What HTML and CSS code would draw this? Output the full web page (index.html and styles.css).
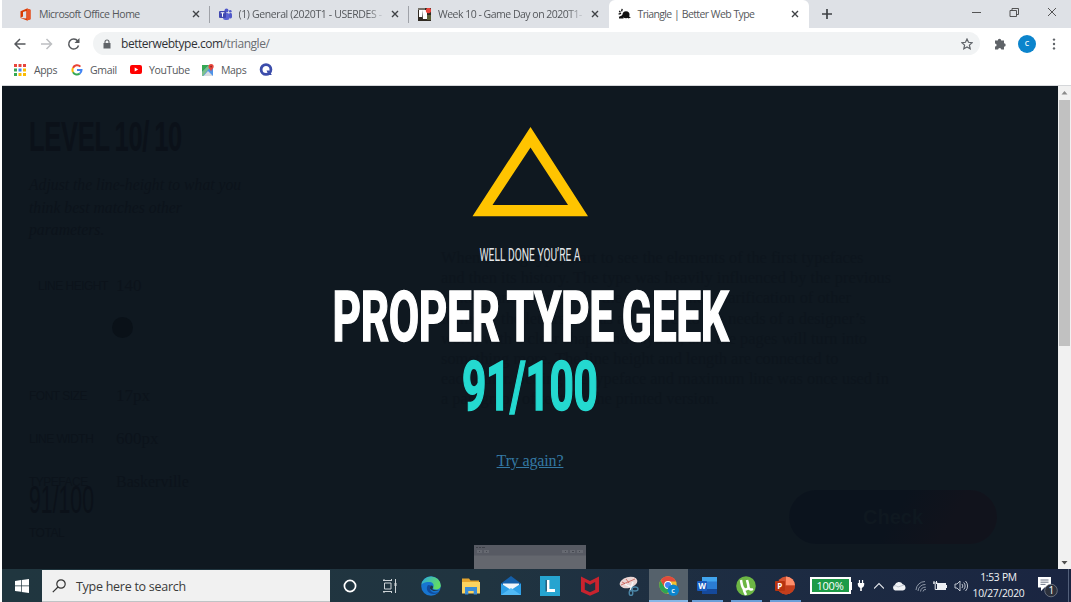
FILE: index.html
```html
<!DOCTYPE html>
<html lang="en">
<head>
<meta charset="utf-8">
<title>Triangle | Better Web Type</title>
<link rel="stylesheet" href="styles.css">
</head>
<body>
<div class="browser">
  <header class="tabs">
    <div class="tab">
      <svg class="fav" viewBox="0 0 13 13"><path d="M1.500 3.200 8 .5l3.500 1.300v9.400L8 12.500 1.500 10l5.800.5V3L4 4v4.500L1.500 10z" fill="#d83b01"/><path d="M8 .5l3.500 1.300v9.400L8 12.500z" fill="#e8572a"/></svg>
      <span class="title t1">Microsoft Office Home</span>
      <svg class="close" viewBox="0 0 8 8"><path d="M1 1l6 6M7 1L1 7"/></svg>
    </div>
    <div class="tab">
      <svg class="fav" viewBox="0 0 13 13"><circle cx="7.500" cy="2.500" r="2" fill="#5059c9"/><circle cx="11.300" cy="3.200" r="1.300" fill="#5059c9"/><rect x="4" y="5" width="6.500" height="7" rx="2.500" fill="#5b63d3"/><rect x="10" y="5" width="3" height="5.500" rx="1.400" fill="#5059c9"/><rect y="3" width="7" height="7" rx="1" fill="#4048b0"/><path d="M1.700 4.800h3.600M3.500 4.800v4" stroke="#fff" stroke-width="1"/></svg>
      <span class="title t2">(1) General (2020T1 - USERDES -</span>
      <svg class="close" viewBox="0 0 8 8"><path d="M1 1l6 6M7 1L1 7"/></svg>
    </div>
    <div class="tab last">
      <svg class="fav" viewBox="0 0 13 13"><rect width="13" height="13" fill="#302a22"/><rect width="7" height="2" fill="#77736a"/><path d="M1 2h3v7H1zM4 2h5v9H5z" fill="#fff"/><path d="M9 7h4v5H9z" fill="#5b5f36"/><circle cx="10.500" cy="2.500" r="2.700" fill="#e8453c"/></svg>
      <span class="title t3">Week 10 - Game Day on 2020T1-</span>
      <svg class="close" viewBox="0 0 8 8"><path d="M1 1l6 6M7 1L1 7"/></svg>
    </div>
    <div class="tab active">
      <svg class="fav" viewBox="0 0 13 13"><path d="M1.300 2.800 2.400 4.400M4.200.8 3.600 3.400M.6 6.200l2.500-.8M1 9.400l3-.9" stroke="#111" stroke-width="1.300"/><circle cx="8" cy="6.800" r="3.500" fill="#111"/><path d="M1 9.500 5.500 6v4.500H1zM10 8l3 1.500-3 1z" fill="#111"/></svg>
      <span class="title t4">Triangle | Better Web Type</span>
      <svg class="close" viewBox="0 0 8 8"><path d="M1 1l6 6M7 1L1 7"/></svg>
    </div>
    <svg class="plus" viewBox="0 0 12 12"><path d="M6 1v10M1 6h10"/></svg>
    <svg class="winbtns" viewBox="0 0 90 20"><path d="M1 8.500h9M39 6.500h6.500v6H39zM41 6.500v-2h6.500v6h-2M77 4l8 8M85 4l-8 8"/></svg>
  </header>
  <div class="toolbar">
    <svg class="nav" viewBox="0 0 80 20"><g fill="none" stroke-width="1.500"><path d="M11.500 10H1M6 5l-5 5 5 5" stroke="#55585c"/><path d="M27 10h10.500M32.500 5l5 5-5 5" stroke="#bdbfc2"/><path d="M63.700 7A5 5 0 1 0 64.500 11.500" stroke="#55585c"/></g><path d="M65.500 4v5h-5z" fill="#55585c"/></svg>
    <div class="omnibox">
      <svg class="lock" viewBox="0 0 8 10"><path d="M.5 4h7v5.500h-7z" fill="#5f6368"/><path d="M2 4.500V3a2 2 0 0 1 4 0v1.500" fill="none" stroke="#5f6368" stroke-width="1.100"/></svg>
      <span class="url">betterwebtype.com<span class="path">/triangle/</span></span>
      <svg class="star" viewBox="0 0 12 12"><path d="M6 1l1.500 3.300 3.600.4-2.700 2.400.8 3.600L6 8.900l-3.200 1.800.8-3.600L.9 4.700l3.600-.4z"/></svg>
    </div>
    <svg class="puzzle" viewBox="0 0 13 13"><path d="M1 3.500h2.800a1.700 1.700 0 1 1 3.400 0H10v2.800a1.700 1.700 0 1 1 0 3.400v2.800H7.300a1.600 1.600 0 1 0-3.200 0H1V9.600a1.600 1.600 0 1 0 0-3.200z"/></svg>
    <span class="avatar">C</span>
    <svg class="dots" viewBox="0 0 4 12"><circle cx="2" cy="1.600" r="1.200"/><circle cx="2" cy="6" r="1.200"/><circle cx="2" cy="10.400" r="1.200"/></svg>
  </div>
  <nav class="bookmarks">
    <svg class="apps" viewBox="0 0 12 12"><path d="M0 0h3v3H0zM4.500 0h3v3h-3zM9 0h3v3H9z" fill="#e8453c"/><path d="M0 4.500h3v3H0z" fill="#34a853"/><path d="M4.500 4.500h3v3h-3z" fill="#4285f4"/><path d="M9 4.500h3v3H9z" fill="#fbbc05"/><path d="M0 9h3v3H0z" fill="#34a853"/><path d="M4.500 9h3v3h-3zM9 9h3v3H9z" fill="#fbbc05"/></svg>
    <span class="bm b1">Apps</span>
    <svg class="goog" viewBox="0 0 12 12"><g fill="none" stroke-width="2"><path d="M9.400 2.600A4.500 4.500 0 0 0 2 4" stroke="#ea4335"/><path d="M2 4a4.500 4.500 0 0 0 0 4.200" stroke="#fbbc05"/><path d="M2 8.200a4.500 4.500 0 0 0 6.800 1.300" stroke="#34a853"/><path d="M8.800 9.500A4.500 4.500 0 0 0 10.500 6H6" stroke="#4285f4"/></g></svg>
    <span class="bm b2">Gmail</span>
    <svg class="yt" viewBox="0 0 12 9"><rect width="12" height="9" rx="2" fill="#f00"/><path d="M4.700 2.500v4L8.200 4.500z" fill="#fff"/></svg>
    <span class="bm b3">YouTube</span>
    <svg class="maps" viewBox="0 0 12 12"><path d="M0 1h11v11H0z" fill="#4f93e8"/><path d="M0 1h7L0 8z" fill="#34a853"/><path d="M0 8 7 1h3L1 12H0z" fill="#7cc08b"/><path d="M1.500 12 6 7l5 5z" fill="#d9dde0"/><path d="M9 7.500C8.500 5.500 6.500 4.800 6.500 2.600a2.600 2.600 0 0 1 5.200 0C11.700 4.800 9.500 5.500 9 7.500z" fill="#e8453c"/><circle cx="9.100" cy="2.600" r=".9" fill="#8b2b20"/></svg>
    <span class="bm b4">Maps</span>
    <svg class="qicon" viewBox="0 0 14 14"><circle cx="7" cy="6.500" r="4.900" fill="none" stroke="#3c4dab" stroke-width="2.800"/><path d="M7.500 7.500h2.700l2.600 4.500H9.600z" fill="#3c4dab"/></svg>
  </nav>
  <div class="viewport">
    <main class="page">
      <div class="ghost">
        <aside class="panel">
          <svg class="g-level" viewBox="0 0 166 60"><text x="0" y="38" textLength="153" lengthAdjust="spacingAndGlyphs">LEVEL 10/ 10</text></svg>
          <p class="g-copy">Adjust the line-height to what you<br>think best matches other<br>parameters.</p>
          <div class="g-row r1"><span class="g-key indent">LINE HEIGHT</span><span>140</span></div>
          <div class="g-knob"></div>
          <div class="g-row"><span class="g-key">FONT SIZE</span><span>17px</span></div>
          <div class="g-row"><span class="g-key">LINE WIDTH</span><span>600px</span></div>
          <div class="g-row r4"><span class="g-key">TYPEFACE</span><span class="g-face">Baskerville</span></div>
          <svg class="g-score" viewBox="0 0 70 40"><text x="0" y="31" textLength="65" lengthAdjust="spacingAndGlyphs">91/100</text></svg>
          <div class="g-key">TOTAL</div>
        </aside>
        <section class="sample">
          <p>When setting type, start to see the elements of the first typefaces<br>and then its history. The type was heavily influenced by the previous<br>century and the work of the printers, then clarification of other<br>forms of the letters. It was an answer to the needs of a designer’s<br>work, with a clear shape and rhythm, and the pages will turn into<br>something more. The line height and length are connected to<br>each other. Setting the typeface and maximum line was once used in<br>a paragraph of text for the printed version.</p>
          <div class="g-check">Check</div>
        </section>
      </div>
      <section class="result">
        <svg class="triangle" viewBox="0 0 116 90"><path fill-rule="evenodd" d="M58.500 0 116 89.300H.5zM58.500 20.500 20.500 78H96z"/></svg>
        <svg class="well" viewBox="0 0 106 24"><text x="2.500" y="17.500" textLength="101" lengthAdjust="spacingAndGlyphs">WELL DONE YOU’RE A</text></svg>
        <svg class="headline" viewBox="0 0 400 70"><text x="2.500" y="60" textLength="396" lengthAdjust="spacingAndGlyphs">PROPER TYPE GEEK</text></svg>
        <svg class="score" viewBox="0 0 140 70"><text x="2" y="59" textLength="135.500" lengthAdjust="spacingAndGlyphs">91/100</text></svg>
        <a class="again" href="#">Try again?</a>
        <svg class="mock" viewBox="0 0 112 24"><path d="M0 0h112v24H0z" fill="#64676e"/><path d="M0 0h112v10.500H0z" fill="#575a63"/><path d="M2 2h2v1H2zM5 2h2v1H5zM8 2h3v1H8z" fill="#3e4149"/><path d="M3 6.500h5M10 6.500h5M88 6.500h6M96 6.500h5M103 6.500h6" stroke="#666971" stroke-width="3"/><path d="M5 6.500h1M12 6.500h1M91 6.500h1M98 6.500h2M105 6.500h1" stroke="#454850"/></svg>
      </section>
    </main>
    <div class="scroll">
      <svg viewBox="0 0 13 13"><path d="M3.500 8.500h6L6.500 5z" fill="#8b8b8b"/></svg>
      <div class="thumb"></div>
      <svg class="down" viewBox="0 0 13 13"><path d="M3.500 5h6l-3 3.500z" fill="#505050"/></svg>
    </div>
  </div>
  <footer class="taskbar">
    <div class="start"><svg viewBox="0 0 14 14"><path d="M0 2l6-.9v5.500H0zM6.700 1 14 0v6.600H6.700zM0 7.300h6v5.500L0 12zM6.700 7.300H14V14l-7.300-1z" fill="#fff"/></svg></div>
    <div class="search">
      <svg viewBox="0 0 14 14"><circle cx="9" cy="5" r="4.200"/><path d="M6 8 .8 13.200"/></svg>
      <span>Type here to search</span>
    </div>
    <div class="apps-row">
      <div><svg class="i14" viewBox="0 0 14 14"><circle cx="7" cy="7" r="5.600" fill="none" stroke="#fff" stroke-width="1.700"/></svg></div>
      <div><svg class="i14" viewBox="0 0 14 14"><path d="M0 1.500h9M0 12.500h9M1.500 4h6.500v6H1.500zM1 0v2M8.500 0v2M1 12v2M8.500 12v2M12.500 0v14" fill="none" stroke="#cdd3d6"/><path d="M11.500 4h2v3h-2z" fill="#cdd3d6"/></svg></div>
      <div><svg class="i20" viewBox="0 0 20 20"><defs><linearGradient id="eg" x1="0" y1="0" x2="1" y2=".4"><stop offset="0" stop-color="#2aa8e0"/><stop offset="1" stop-color="#63dd63"/></linearGradient></defs><circle cx="10" cy="10" r="9.800" fill="#1775d0"/><path d="M.3 9A9.800 9.800 0 0 1 19.800 9.500c0 4-5.500 5-7.800 3 1.500-3 .5-6-3-6.500C5 5.500 1 7 .3 9z" fill="url(#eg)"/><path d="M7 9c-3 4 0 9 6 9 2 0 4-.8 5-2-5 2-9 0-9-3.500 0-2 1-3 1-3z" fill="#114b9c"/><path d="M11.200 13c1.300-1.500 1-3-.3-3.600-1.500 0-2 1.600-1.900 3.100 1.500 2.500 6 3.500 9.500 1.500-3 .8-6.300.2-7.300-1z" fill="#213640"/></svg></div>
      <div><svg class="i20" viewBox="0 0 20 20"><path d="M1 2.500h7l1.500 2H18V8H1z" fill="#e5a52e"/><path d="M1 6h18v11.500H1z" fill="#fbd360"/><path d="M4 11h12v7.500h-3.300V15H7.300v3.500H4z" fill="#3b8dd6"/></svg></div>
      <div><svg class="i20" viewBox="0 0 20 20"><path d="M0 7.500 10 0l10 7.500V12H0z" fill="#155fa8"/><path d="M2 7.500h16v6H2z" fill="#f2f6fa"/><path d="M0 7.500 10 14l10-6.500V19H0z" fill="#2e9fe6"/><path d="M0 19 10 12l10 7z" fill="#51b9f5"/></svg></div>
      <div><svg class="i20" viewBox="0 0 20 20"><path d="M0 0h20v20H0z" fill="#26a4d0"/><path d="M8 4v10.500h7" fill="none" stroke="#fff" stroke-width="2.800"/><path d="M6.200 4v11.500" stroke="#0d3550"/></svg></div>
      <div><svg class="i20" viewBox="0 0 20 20"><path d="M1 .5l9 4.500 9-4.500v15.200l-9 4-9-4zM4.800 6v7.800l5.200 2.400 5.200-2.400V6L10 8.700z" fill="#c8232e" fill-rule="evenodd"/></svg></div>
      <div><svg class="i20" viewBox="0 0 20 20"><ellipse cx="9.500" cy="6.500" rx="9" ry="5.500" transform="rotate(-15 9.500 6.500)" fill="#ead5d3"/><path d="M2 9 16 3M7 3l3 4M3 6l6 3" stroke="#c4483f" stroke-width=".7"/><path d="M6 8l8 4M14 6l-3 9" stroke="#f4f6f8" stroke-width="1.500"/><g fill="none" stroke="#4c87a8" stroke-width="1.400"><ellipse cx="16" cy="13" rx="3" ry="2"/><ellipse cx="12" cy="17" rx="1.800" ry="2.500"/></g></svg></div>
      <div class="on"><svg class="i20" viewBox="0 0 20 20"><circle cx="9" cy="9" r="8.700" fill="#f2c12e"/><path d="M1.500 4.600A8.700 8.700 0 0 1 17 5.500H9z" fill="#e14a3c"/><path d="M1.500 4.600A8.700 8.700 0 0 0 8 17.700l4-6L5.500 11z" fill="#2fa552"/><path d="M1.500 4.600 5.500 11 9 5.500z" fill="#e14a3c"/><circle cx="9" cy="9" r="3.900" fill="#fff"/><circle cx="9" cy="9" r="3" fill="#4285f4"/><circle cx="14.300" cy="14.300" r="5.700" fill="#0c84cc"/><text x="12.300" y="17" class="badge-c">c</text></svg></div>
      <div class="run"><svg class="i20" viewBox="0 0 20 20"><rect x="5" y="1" width="15" height="17" rx="1" fill="#2b7cd3"/><path d="M5 1h15v4.500H5z" fill="#41a5ee"/><path d="M5 13h15v5H5z" fill="#15499b"/><rect y="5" width="10" height="10" rx="1" fill="#185abd"/><text x="1.300" y="12.800" class="glyph">W</text></svg></div>
      <div class="run"><svg class="i20" viewBox="0 0 20 20"><circle cx="10" cy="10" r="9.800" fill="#6cb644"/><path d="M5 4c.5 4 1 6.500 2.500 8.500C9 14 12 13.500 12.500 11.500 12.500 9 11.500 6 11 4M12.500 11.500c.7 2 2.500 2.500 4.500 1.500M7.500 12.500C8 15 9 17 10 19" fill="none" stroke="#fff" stroke-width="2.500"/></svg></div>
      <div class="run"><svg class="i20" viewBox="0 0 20 20"><circle cx="11" cy="9.500" r="9" fill="#d35230"/><path d="M11 .5a9 9 0 0 1 9 9h-9z" fill="#ff8f6b"/><path d="M2 9.500h18a9 9 0 0 1-18 0z" fill="#c43e1c"/><rect y="5" width="10" height="10" rx="1" fill="#b7330f"/><text x="2.300" y="12.800" class="glyph">P</text></svg></div>
    </div>
    <div class="tray">
      <span class="charge">100%</span><span class="nub"></span>
      <svg class="plug" viewBox="0 0 10 14"><path d="M1 4h8v2.500A4 4 0 0 1 6 10v4H4v-4A4 4 0 0 1 1 6.500zM2.300 0h1.500v4H2.300zM6.200 0h1.500v4H6.200z"/></svg>
      <svg class="chev" viewBox="0 0 10 10"><path d="M0 7.500l5-5 5 5"/></svg>
      <svg class="cloud" viewBox="0 0 14 10"><path d="M3 9.500a3 3 0 0 1-.3-5.500 4.400 4.400 0 0 1 8-.8A3.200 3.200 0 0 1 11 9.500z"/><path d="M1 5.500c2-1 3-1 5 .5l6-2" fill="none" stroke="#a9b0bd" stroke-width=".7"/></svg>
      <svg class="wifi" viewBox="0 0 12 12"><path d="M1 10A9 9 0 0 1 10 1.500M3 11A7 7 0 0 1 10.500 4.500M5.500 11.500a5 5 0 0 1 5.300-4.300M8 11.500a2.500 2.500 0 0 1 3-2"/></svg>
      <svg class="batt" viewBox="0 0 14 10"><path d="M4 2h9v7H4z" fill="#eceff3"/><path d="M0 2h4.500M1 0v3M3.500 0v3M2.200 3v5.500H4M13.500 4v3" fill="none" stroke="#eceff3"/></svg>
      <svg class="vol" viewBox="0 0 14 12"><path d="M1 4h2l3-3v10L3 8H1zM8 4a3 3 0 0 1 0 4M9.700 2.500a5 5 0 0 1 0 7M11.500 1a7 7 0 0 1 0 10"/></svg>
      <div class="clock"><span>1:53 PM</span><span>10/27/2020</span></div>
      <svg class="note" viewBox="0 0 22 22"><path d="M1 1h13v10.500H7.500L4 15v-3.500H1z" fill="#fff"/><path d="M3.500 4h8M3.500 6.200h8M3.500 8.400h5" stroke="#5b6577" stroke-width=".9"/><circle cx="14" cy="14.500" r="6.300" fill="#2b303b" stroke="#828a96" stroke-width=".7"/><text x="11.400" y="18.300" class="badge-n">1</text></svg>
      <span class="peek"></span>
    </div>
  </footer>
</div>
</body>
</html>
```

FILE: styles.css
```css
* { box-sizing: border-box; }
body { margin: 0; background: #fff; font-family: "Open Sans", "Noto Sans", sans-serif; overflow: hidden; }
svg { display: block; flex: none; }
.browser { width: 1071px; height: 602px; padding-left: 2px; display: flex; flex-direction: column; }

.tabs { height: 28px; flex: none; display: flex; background: #dee1e6; padding-left: 8px; }
.tab { width: 199.500px; height: 28px; flex: none; display: flex; align-items: center; padding-left: 9px; position: relative; color: #55585c; }
.tab:not(.last):not(.active)::after { content: ""; width: 1px; height: 17px; background: #9fa2a8; margin-left: 9px; }
.tab.active { background: #fff; width: 200px; border-radius: 6px 6px 0 0; }
.fav { width: 13px; height: 13px; }
.title { width: 147px; margin-left: 7px; font-size: 10.500px; white-space: pre; letter-spacing: -.5px; }
.t2 { letter-spacing: -.38px; }
.t2, .t3 { -webkit-mask-image: linear-gradient(90deg, #000 88%, transparent); mask-image: linear-gradient(90deg, #000 88%, transparent); }
.t4 { letter-spacing: -.65px; }
.t1, .t4 { word-spacing: .5px; }
.close { width: 8px; height: 8px; margin-left: 6px; fill: none; stroke: #3f4246; stroke-width: 1.400; }
.plus { width: 12px; height: 12px; margin: 8px 0 0 12px; fill: none; stroke: #3f4246; stroke-width: 1.700; }
.winbtns { width: 90px; height: 20px; margin: 4px 0 0 138px; fill: none; stroke: #444; stroke-width: .9; }

.toolbar { height: 31px; flex: none; display: flex; align-items: center; padding-left: 12px; background: #fff; }
.nav { width: 80px; height: 20px; }
.omnibox { width: 887px; height: 23px; margin-left: -1px; border-radius: 12px; background: #f1f3f4; display: flex; align-items: center; padding-left: 10px; }
.lock { width: 8px; height: 10px; }
.url { width: 846px; margin-left: 10px; font-size: 12px; letter-spacing: -.45px; color: #303236; white-space: nowrap; }
.path { color: #6a6d72; }
.star { width: 12px; height: 12px; margin-left: -6px; fill: none; stroke: #5f6368; stroke-width: 1.200; }
.puzzle { width: 13px; height: 13px; margin-left: 14px; fill: #5f6368; }
.avatar { width: 18px; height: 18px; margin-left: 11px; border-radius: 50%; background: #0c84cc; color: #fff; font-size: 7px; font-weight: 600; line-height: 18px; text-align: center; }
.dots { width: 4px; height: 12px; margin-left: 16px; fill: #5f6368; }

.bookmarks { height: 27px; flex: none; display: flex; align-items: center; padding: 0 0 5px 12px; background: #fff; border-bottom: 1px solid #d5d7da; }
.bm { font-size: 10.500px; letter-spacing: -.35px; color: #55585c; white-space: nowrap; flex: none; }
.b1 { width: 37px; margin-left: 8px; }
.b2 { width: 40px; margin-left: 7px; }
.b3 { width: 53px; margin-left: 7px; }
.b4 { width: 34px; margin-left: 7px; }
.apps, .goog, .yt, .maps { width: 12px; height: 12px; }
.yt { height: 9px; }
.qicon { width: 14px; height: 14px; margin-left: 4px; }

.viewport { height: 483px; flex: none; display: flex; }
.page { width: 1056px; height: 483px; flex: none; position: relative; overflow: hidden; background: #0f1820; }
.ghost { position: absolute; inset: 0; display: flex; color: #0c131b; font-family: "Liberation Serif", serif; }
.panel { width: 390px; padding: 27px 0 0 27px; }
.panel text { font-family: "Liberation Sans", sans-serif; font-weight: 700; fill: #0b1119; }
.g-level { width: 166px; height: 60px; }
.g-level text { font-size: 43px; letter-spacing: -.5px; word-spacing: -3px; }
.g-copy { margin: 1px 0 0; font-size: 15.700px; font-style: italic; line-height: 22.500px; white-space: nowrap; }
.g-row { height: 43px; display: flex; font-size: 17px; line-height: 22px; }
.g-row.r1 { margin-top: 33px; height: 42px; }
.g-row.r4 { height: 11px; }
.g-key { width: 87px; font: 12px/22px "Liberation Sans", sans-serif; letter-spacing: -.5px; }
.g-face { font-size: 16px; }
.indent { padding-left: 9px; }
.g-knob { width: 21px; height: 21px; border-radius: 50%; margin: 0 0 47px 83px; background: #0a1118; }
.g-score { width: 70px; height: 40px; }
.g-score text { font-size: 39px; font-weight: 400; }
.sample { width: 600px; padding: 162px 0 0 49px; }
.sample p { margin: 0; font-size: 16.400px; line-height: 20.200px; white-space: nowrap; color: #0d151d; }
.g-check { width: 208px; height: 54px; margin: 80px 0 0 348px; border-radius: 27px; background: linear-gradient(120deg, #0b131d 50%, #11131c 75%); color: #0f1820; font: 700 20px/54px "Liberation Sans", sans-serif; text-align: center; }

.result { height: 483px; position: relative; display: flex; flex-direction: column; align-items: center; padding-top: 41px; }
.triangle { width: 116px; height: 90px; fill: #ffc400; }
.well { width: 106px; height: 24px; margin-top: 26px; }
.well text { font: 400 17.500px Roboto, sans-serif; fill: #e4e7ea; }
.headline { width: 400px; height: 70px; margin-top: 14px; }
.headline text { font: 700 71px Roboto, sans-serif; letter-spacing: -.5px; word-spacing: -4px; fill: #fff; stroke: #fff; stroke-width: 1.700; }
.score { width: 140px; height: 70px; }
.score text { font: 700 69px Roboto, sans-serif; letter-spacing: -.5px; fill: #24d9d0; stroke: #24d9d0; stroke-width: 1.700; }
.again { margin-top: 30px; font: 16px/20px "Liberation Serif", serif; letter-spacing: -.15px; color: #3478a3; text-decoration: underline; }
.mock { width: 112px; height: 24px; margin-top: 74px; }

.scroll { width: 13px; height: 483px; background: #f1f1f1; display: flex; flex-direction: column; }
.scroll svg { width: 13px; height: 13px; }
.thumb { width: 11px; height: 246px; margin: 1px 0 0 1px; background: #c1c1c1; }
.scroll .down { margin-top: auto; }

.taskbar { height: 33px; flex: none; display: flex; background: linear-gradient(90deg, #20363f, #203440 45%, #1d2c42 70%, #1a2541); }
.start { width: 40px; flex: none; display: flex; align-items: center; justify-content: center; }
.start svg { width: 14px; height: 14px; }
.search { width: 288px; flex: none; height: 32px; margin-top: 1px; background: #f1f1f1; border-bottom: 1px solid #bfc3c5; display: flex; align-items: center; padding-left: 10px; }
.search svg { width: 14px; height: 14px; fill: none; stroke: #333; stroke-width: 1.200; }
.search span { margin-left: 10px; padding-top: 1px; font-size: 12.500px; letter-spacing: -.27px; color: #3a3a3a; white-space: nowrap; }
.apps-row { width: 474.500px; flex: none; display: grid; grid-template-columns: 39.500px 41px 40.500px 40px 39.500px 39.500px 39.500px 39.500px 39px 38.500px 39px 39px; }
.apps-row > div { display: flex; align-items: center; justify-content: center; height: 33px; }
.i14 { width: 14px; height: 14px; }
.i20 { width: 20px; height: 20px; }
.apps-row > .on { background: #55616b; border-bottom: 2px solid #86b6e6; padding-top: 2px; }
.apps-row > .run { background: linear-gradient(#6a9fd8, #6a9fd8) center bottom / 31px 2px no-repeat; }
.glyph { font: 700 8px "Open Sans", sans-serif; fill: #fff; }
.badge-c { font: 700 7px "Open Sans", sans-serif; fill: #d6ecf9; }
.badge-n { font: 10px "Open Sans", sans-serif; fill: #fff; }
.tray { display: flex; align-items: center; flex: none; padding-left: 5px; }
.charge { width: 41px; height: 17px; border: 2px solid #fff; background: #1d9b47; color: #fff; font-size: 11px; line-height: 13px; text-align: center; letter-spacing: -.2px; }
.nub { width: 1px; height: 8px; background: #fff; }
.plug { width: 8px; height: 13px; margin-left: 5px; fill: #fff; }
.chev { width: 10px; height: 10px; margin-left: 9px; fill: none; stroke: #e2e5ea; stroke-width: 1.100; }
.cloud { width: 14px; height: 10px; margin-left: 8px; fill: #f0f2f5; }
.wifi { width: 12px; height: 12px; margin-left: 9px; fill: none; stroke: #99a1b0; stroke-width: .9; }
.batt { width: 14px; height: 10px; margin-left: 6px; }
.vol { width: 14px; height: 12px; margin-left: 7px; fill: none; stroke: #d0d5dd; stroke-width: .9; }
.clock { width: 60px; margin-left: 1px; display: flex; flex-direction: column; align-items: center; color: #f1f3f5; font-size: 10.300px; line-height: 15.500px; letter-spacing: -.27px; }
.note { width: 22px; height: 22px; margin: 2px 0 0 8px; }
.peek { width: 1px; height: 33px; margin-left: 9px; background: #53607a; }
```
